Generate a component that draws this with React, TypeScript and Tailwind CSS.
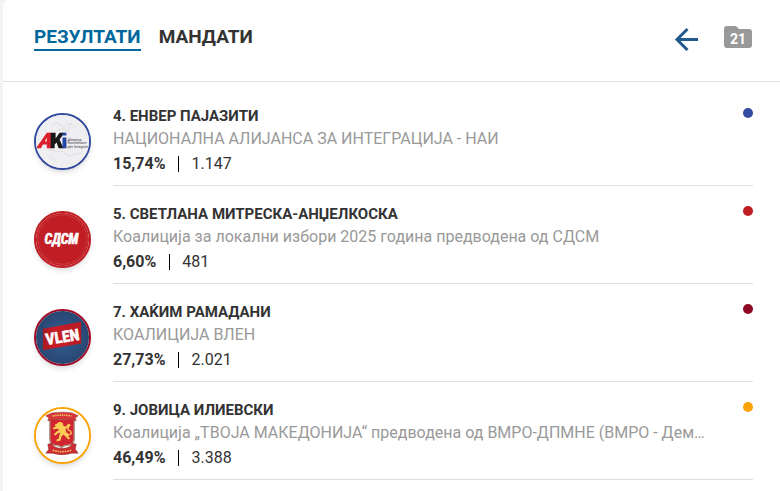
import type { ReactNode } from 'react';
import clsx from 'clsx';

interface Candidate {
  name: string;
  party: string;
  percent: string;
  votes: string;
  dot: string;
  ring: string;
  logo: ReactNode;
}

const AkiLogo = () => (
  <svg viewBox="0 0 54 54" className="h-full w-full">
    <rect width="54" height="54" fill="#efeff1" />
    <g fill="none" stroke="#dcdce0" strokeWidth="1">
      <path d="M16 12c2-4 7-5 9-2l3 3 4-4c4-1 6 3 9 4M20 17c4-4 8-3 13 0M12 36c4-2 8 3 12 1s7 7 13 4 8 0 10-3M14 41l6 6M36 8l-4 9" />
    </g>
    <path d="M0 34 11 18h5v16h-5v-4H7l-2 4zM9 27h2v-4z" fill="#dc1f2c" />
    <path d="M15 18h5v6l4-6h5l-5 7 4 9h-5l-2-6-2 2v4h-4z" fill="#171717" />
    <path d="M27 23h4v11h-4zM27 18h4v3h-4z" fill="#2446a5" />
    <g fill="#3f404a" fontFamily="Roboto, sans-serif" fontSize="4">
      <text x="32" y="26">Aleanca</text>
      <text x="32" y="30">Kombëtare</text>
      <text x="32" y="34">për Integrim</text>
    </g>
  </svg>
);

const SdsmLogo = () => (
  <svg viewBox="0 0 54 54" className="h-full w-full">
    <rect width="54" height="54" fill="#c01d24" />
    <circle cx="27" cy="27" r="25" fill="none" stroke="#d9676b" strokeWidth=".5" strokeDasharray="5 1" />
    <text
      x="26"
      y="32"
      textAnchor="middle"
      fill="#fff"
      stroke="#fff"
      strokeWidth=".6"
      fontFamily="'Roboto Condensed', Roboto, sans-serif"
      fontSize="14"
      fontStyle="italic"
      fontWeight="700"
    >
      СДСМ
    </text>
  </svg>
);

const VlenLogo = () => (
  <svg viewBox="0 0 54 54" className="h-full w-full">
    <defs>
      <radialGradient id="vlen-bg">
        <stop offset="0" stopColor="#31619a" />
        <stop offset="1" stopColor="#294671" />
      </radialGradient>
      <linearGradient id="vlen-flag">
        <stop offset="0" stopColor="#a51a23" />
        <stop offset=".3" stopColor="#c91e27" />
        <stop offset="1" stopColor="#b81b25" />
      </linearGradient>
    </defs>
    <rect width="54" height="54" fill="url(#vlen-bg)" />
    <path d="M7 18 46 11v22L7 40z" fill="url(#vlen-flag)" />
    <text
      x="27"
      y="32"
      textAnchor="middle"
      transform="rotate(-9 27 27)"
      fill="#fff"
      stroke="#fff"
      strokeWidth=".6"
      fontFamily="'Roboto Condensed', Roboto, sans-serif"
      fontSize="16"
      fontWeight="700"
    >
      VLEN
    </text>
  </svg>
);

const VmroLogo = () => (
  <svg viewBox="0 0 54 54" className="h-full w-full">
    <rect width="54" height="54" fill="#fff" />
    <path d="M14 10h25v20c0 5-3 7-7 7-3 0-5 1-6 3-1-2-3-3-6-3-4 0-6-2-6-7z" fill="#d32531" stroke="#aaa08a" strokeWidth="1.4" />
    <path d="M10 7l6-3c7-1 14-1 21 0l6 3-3 2 1 3-5-1c-6-1-13-1-19 0l-5 1 1-3z" fill="#d8353c" stroke="#8c3a2b" strokeWidth=".5" />
    <path d="M17 7c7-1 12-1 19 0" fill="none" stroke="#ebc45a" strokeWidth="1.6" strokeDasharray="1.5 .8" />
    <path
      d="M21 15l3-2 3 1 1 3 2 1 3-3 2 1-3 3-2 2 1 3 3 2-1 2 2 2-2 1-3-3-2-2-2 2-1 4-4 1v-2l2-1 1-4 1-2-3 1-2 2-2-1 3-3 3-2-3-1-3 1-1-2 3-1-1-2z"
      fill="#f9cd55"
    />
    <path d="M34 26c3 0 2-4 0-4s-2-4 1-6" fill="none" stroke="#f9cd55" strokeWidth="1.4" />
    <path d="M10 45l3-4-1-5 4-1 2 3c6 3 11 3 17 0l2-3 4 1-1 5 3 4h-7c-6 2-13 2-19 0z" fill="#d02c35" stroke="#802f27" strokeWidth=".5" />
    <path d="M17 42c7 2 12 2 19 0" fill="none" stroke="#ebc45a" strokeWidth="1.6" strokeDasharray="1.6 .9" />
  </svg>
);

const candidates: Candidate[] = [
  {
    name: '4. ЕНВЕР ПАЈАЗИТИ',
    party: 'НАЦИОНАЛНА АЛИЈАНСА ЗА ИНТЕГРАЦИЈА - НАИ',
    percent: '15,74%',
    votes: '1.147',
    dot: 'bg-[#324a9f]',
    ring: 'border-[#324a9f]',
    logo: <AkiLogo />,
  },
  {
    name: '5. СВЕТЛАНА МИТРЕСКА-АНЏЕЛКОСКА',
    party: 'Коалиција за локални избори 2025 година предводена од СДСМ',
    percent: '6,60%',
    votes: '481',
    dot: 'bg-[#c01d24]',
    ring: 'border-[#c01d24]',
    logo: <SdsmLogo />,
  },
  {
    name: '7. ХАЌИМ РАМАДАНИ',
    party: 'КОАЛИЦИЈА ВЛЕН',
    percent: '27,73%',
    votes: '2.021',
    dot: 'bg-[#8f0824]',
    ring: 'border-[#a10b26]',
    logo: <VlenLogo />,
  },
  {
    name: '9. ЈОВИЦА ИЛИЕВСКИ',
    party: 'Коалиција „ТВОЈА МАКЕДОНИЈА“ предводена од ВМРО-ДПМНЕ (ВМРО - Дем…',
    percent: '46,49%',
    votes: '3.388',
    dot: 'bg-[#f9a307]',
    ring: 'border-[#f9a307]',
    logo: <VmroLogo />,
  },
];

const CandidateRow = ({ name, party, percent, votes, dot, ring, logo }: Candidate) => (
  <li className="flex gap-[22px]">
    <div className={clsx('mt-[7px] h-[57px] w-[57px] shrink-0 overflow-hidden rounded-full border-2 bg-white shadow-md', ring)}>
      {logo}
    </div>
    <div className="flex min-w-0 flex-1 gap-7 border-b border-[#dcdfe0] pb-[9px]">
      <div className="min-w-0 flex-1">
        <h2 className="truncate text-[15px] leading-5 font-bold">{name}</h2>
        <p className="truncate text-base leading-[26px] text-[#999]">{party}</p>
        <p className="flex items-center text-base leading-6">
          <strong className="font-bold">{percent}</strong>
          <span className="mr-3 ml-[13px] h-4 w-px bg-black" />
          <span>{votes}</span>
        </p>
      </div>
      <span className={clsx('mt-0.5 h-2.5 w-2.5 shrink-0 rounded-full', dot)} />
    </div>
  </li>
);

const App = () => (
  <div className="min-h-screen bg-[#f3f3f3] pl-[3px] font-['Roboto','Noto_Sans',sans-serif] text-[#333]">
    <main className="min-h-screen rounded-tl-md bg-white">
      <header className="flex items-center justify-between border-b border-[#dcdfe0] pt-6 pr-7 pb-[29px] pl-[31px]">
        <nav className="flex gap-[18px] text-[19px] leading-6 font-bold">
          <button type="button" className="border-b-2 border-[#00689d] text-[#00689d]">
            РЕЗУЛТАТИ
          </button>
          <button type="button" className="border-b-2 border-transparent">
            МАНДАТИ
          </button>
        </nav>
        <div className="flex items-center gap-6">
          <button type="button" aria-label="Назад">
            <svg viewBox="0 0 26 26" className="h-[26px] w-[26px]" fill="none" stroke="#22598c" strokeWidth="3">
              <path d="M13.500 4 3 14.500 13.500 25M3 14.500h21" />
            </svg>
          </button>
          <button type="button" className="grid h-7 w-7 place-items-center">
            <svg viewBox="0 0 28 28" className="col-start-1 row-start-1 h-7 w-7" fill="#999">
              <path d="M3 2h8q1 0 2 1l2 2h10q3 0 3 3v13q0 3-3 3H3q-3 0-3-3V5q0-3 3-3z" />
            </svg>
            <span className="z-10 col-start-1 row-start-1 pt-0.5 text-sm leading-5 font-bold text-white">21</span>
          </button>
        </div>
      </header>
      <ul className="flex flex-col gap-[18px] pt-6 pr-[27px] pl-[31px]">
        {candidates.map((candidate) => (
          <CandidateRow key={candidate.name} {...candidate} />
        ))}
      </ul>
    </main>
  </div>
);

export default App;
